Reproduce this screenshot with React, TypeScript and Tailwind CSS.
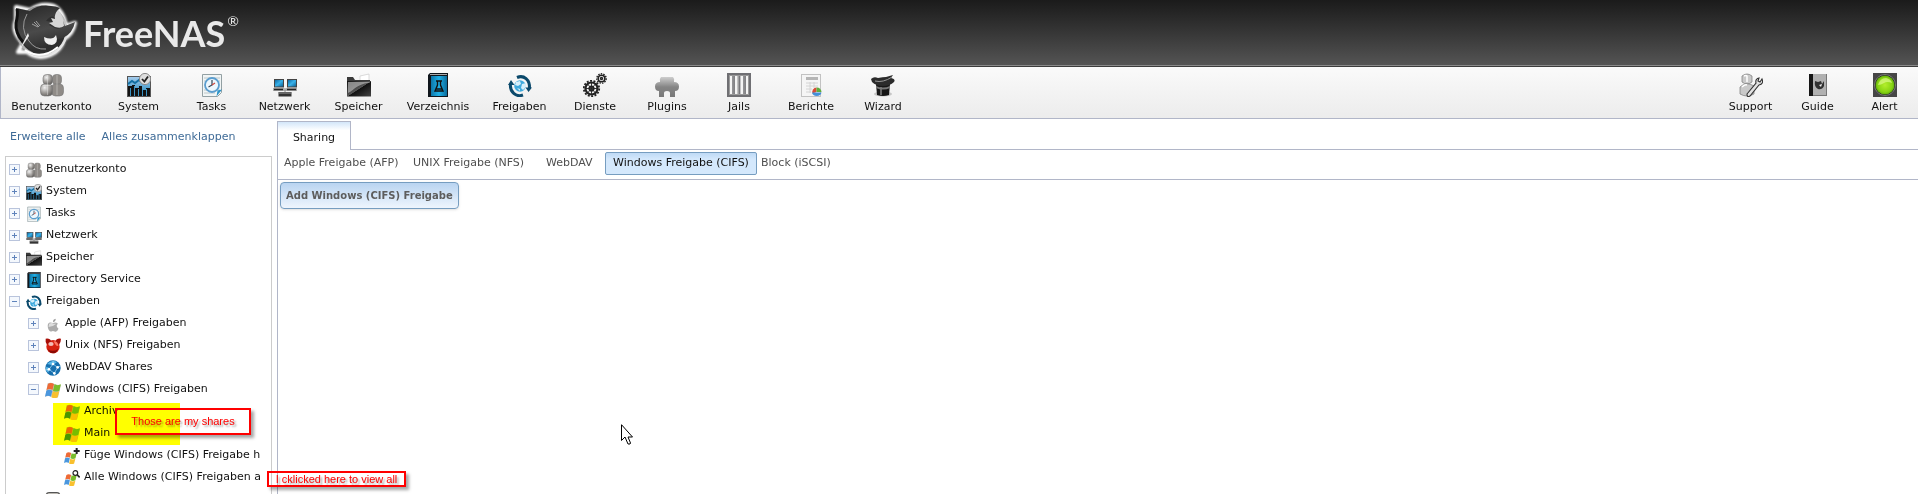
import { useId, type ReactNode } from "react";
import clsx from "clsx";

type IconProps = { className?: string };

function Icon({ className = "size-6", children }: IconProps & { children: ReactNode }) {
  return (
    <svg viewBox="0 0 24 24" className={clsx("shrink-0", className)} aria-hidden="true">
      {children}
    </svg>
  );
}

function UsersIcon(props: IconProps) {
  const id = useId();
  return (
    <Icon {...props}>
      <defs>
        <radialGradient id={id} cx="0.35" cy="0.3" r="0.8">
          <stop offset="0" stopColor="#f0f0f0" />
          <stop offset="0.5" stopColor="#a3a09d" />
          <stop offset="1" stopColor="#5f5c59" />
        </radialGradient>
      </defs>
      <g fill={`url(#${id})`} stroke="#777" strokeWidth="0.6">
        <rect x="12.5" y="1.5" width="9" height="10" rx="3.5" fill="#8f8b87" />
        <rect x="11.5" y="11" width="12" height="12" rx="4" fill="#8f8b87" />
        <rect x="3" y="1.5" width="9.5" height="10" rx="3.5" />
        <rect x="0.5" y="11" width="12" height="12" rx="4" />
      </g>
      <path d="M7.5 2v20M3 12.5h8M17 2v20" stroke="#fff" strokeOpacity="0.35" />
    </Icon>
  );
}

function SystemIcon(props: IconProps) {
  const id = useId();
  return (
    <Icon {...props}>
      <defs>
        <linearGradient id={id} x1="0" y1="0" x2="0" y2="1">
          <stop offset="0" stopColor="#a9cdec" />
          <stop offset="1" stopColor="#1684bd" />
        </linearGradient>
      </defs>
      <rect x="0.5" y="3.5" width="23" height="20" fill={`url(#${id})`} stroke="#555" />
      <path d="M1 11l4-3 3 2 4-3 4 3 5-2" fill="none" stroke="#1270a4" strokeWidth="2" />
      <path d="M1 13h4v-1h3v3h4v-2h3v4h4v-2h4v8H1z" fill="#111" />
      <path d="M3.5 15v8M7.5 13v10M11.5 16v7M15.5 17v6M19.5 16v7" stroke="#3992c4" />
      <circle cx="18" cy="6" r="5.6" fill="#dedede" stroke="#8a8a8a" />
      <path d="M15 6l2.4 2.6L21 3.5" fill="none" stroke="#222" strokeWidth="1.8" />
    </Icon>
  );
}

function TasksIcon(props: IconProps) {
  return (
    <Icon {...props}>
      <path d="M2.5 1.5h19v18l-4 4h-15z" fill="#f1f5f5" stroke="#93a0a3" />
      <path d="M4 5h16M4 8h16M4 17h16M4 20h11" stroke="#bcc7ca" />
      <circle cx="12" cy="12" r="7" fill="#edf7fd" stroke="#5b9dce" strokeWidth="1.8" />
      <path d="M12 7v5l-3.5 2" fill="none" stroke="#345" strokeWidth="1.2" />
      <path d="M12 12l3-2" stroke="#d0453a" strokeWidth="1.2" />
      <path d="M16.5 23.5l1-6 4.5-1z" fill="#2b93c8" />
    </Icon>
  );
}

function NetworkIcon(props: IconProps) {
  const id = useId();
  return (
    <Icon {...props}>
      <defs>
        <linearGradient id={id} x1="0" y1="0" x2="1" y2="1">
          <stop offset="0" stopColor="#0a5d96" />
          <stop offset="0.5" stopColor="#39b2ea" />
          <stop offset="1" stopColor="#075688" />
        </linearGradient>
      </defs>
      <g fill={`url(#${id})`} stroke="#444">
        <rect x="1.5" y="6.5" width="9" height="7.5" />
        <rect x="14.5" y="6.5" width="9" height="7.5" />
      </g>
      <path d="M0 15h11l1 3H0zM13 15h11v3H12z" fill="#aaa" />
      <path d="M1 16.500h9M14 16.500h9" stroke="#222" strokeWidth="1.4" />
      <path d="M12 15v5" stroke="#888" />
      <rect x="5.5" y="19" width="13" height="4.5" fill="#333" />
      <path d="M6 20h12" stroke="#999" />
    </Icon>
  );
}

function StorageIcon(props: IconProps) {
  const id = useId();
  return (
    <Icon {...props}>
      <defs>
        <linearGradient id={id} x1="0" y1="0" x2="1" y2="1">
          <stop offset="0" stopColor="#111" />
          <stop offset="0.5" stopColor="#555" />
          <stop offset="0.52" stopColor="#111" />
          <stop offset="1" stopColor="#444" />
        </linearGradient>
      </defs>
      <path d="M13 3l9-2v7h-9z" fill="#fff" stroke="#ccc" strokeWidth="0.7" />
      <path d="M0 4h6l2 3h15v3H0z" fill="#3a3a3a" />
      <path d="M0 8h24v15.5H0z" fill={`url(#${id})`} />
      <path d="M1 20C7 18 7 12 23 9.500V9H1z" fill="#b5b5b5" fillOpacity="0.7" />
    </Icon>
  );
}

function DirectoryIcon(props: IconProps) {
  const id = useId();
  return (
    <Icon {...props}>
      <defs>
        <linearGradient id={id}>
          <stop offset="0" stopColor="#0d76a8" />
          <stop offset="0.5" stopColor="#1fb1e8" />
          <stop offset="1" stopColor="#0c6c9b" />
        </linearGradient>
      </defs>
      <path d="M2 2l2-2h18v24H2z" fill="#10161c" />
      <rect x="5" y="3" width="16" height="20" fill={`url(#${id})`} />
      <path d="M4 1h17v1H4z" fill="#aaa" />
      <path d="M10 8h6M11.500 8v4L9 18h8l-2.500-6V8M10 16h6" fill="none" stroke="#111" strokeWidth="1.4" />
    </Icon>
  );
}

function SharingIcon(props: IconProps) {
  return (
    <Icon {...props}>
      <circle cx="12" cy="13" r="5.8" fill="#3fa9dc" />
      <path d="M8 9l4-1 1 3-3 2-3-1zM14 11l4-1v4l-3 3-2-2zM9 15l3 1v2z" fill="#d5effb" />
      <g fill="none" stroke="#0b496b" strokeWidth="3">
        <path d="M9 4.500C16 1.500 22 7 21.500 15" />
        <path d="M15 22C8 24.500 1.500 19 2.500 11" />
      </g>
      <path d="M17.500 14.500h6.500l-3.500 4.500zM0 12l3-5 3.500 5z" fill="#0b496b" />
    </Icon>
  );
}

function ServicesIcon(props: IconProps) {
  return (
    <Icon {...props}>
      <g fill="none" stroke="#232323">
        <circle cx="8.500" cy="15.500" r="6" strokeWidth="2.200" />
        <circle cx="8.500" cy="15.500" r="7.700" strokeWidth="1.800" strokeDasharray="2 1.460" />
        <circle cx="8.500" cy="15.500" r="2.200" strokeWidth="1.800" />
        <path d="M8.500 9v13M2.500 15.500h12M4.500 11l8 9M12.500 11l-8 9" strokeWidth="0.900" />
        <circle cx="18.500" cy="5.500" r="3.300" strokeWidth="1.600" />
        <circle cx="18.500" cy="5.500" r="4.700" strokeWidth="1.400" strokeDasharray="1.500 1.100" />
        <circle cx="18.500" cy="5.500" r="1" strokeWidth="1.400" />
      </g>
    </Icon>
  );
}

function PluginsIcon(props: IconProps) {
  const id = useId();
  return (
    <Icon {...props}>
      <defs>
        <linearGradient id={id} x1="0" y1="0" x2="0" y2="1">
          <stop offset="0" stopColor="#cecece" />
          <stop offset="0.500" stopColor="#858585" />
          <stop offset="1" stopColor="#777" />
        </linearGradient>
      </defs>
      <path
        d="M6 4h12q2 2 1 5 5 0 5 4.500t-4 4.500v6h-5v-4q0-2-3-2t-3 2v4H4v-6Q0 18 0 13.500T5 9Q4 6 6 4z"
        fill={`url(#${id})`}
      />
    </Icon>
  );
}

function JailsIcon(props: IconProps) {
  return (
    <Icon {...props}>
      <rect x="1" y="1" width="22" height="22" fill="#f4f4f4" stroke="#6f6f73" strokeWidth="2" />
      <rect x="2.500" y="2.500" width="19" height="19" fill="none" stroke="#999" />
      <path d="M6.500 3v18M12 3v18M17.500 3v18" stroke="#77777b" strokeWidth="2.800" />
      <path d="M6 3v18M11.500 3v18M17 3v18" stroke="#bbb" strokeWidth="0.600" />
    </Icon>
  );
}

function ReportsIcon(props: IconProps) {
  return (
    <Icon {...props}>
      <rect x="2.500" y="1.500" width="19" height="22" fill="#f5f5f5" stroke="#c2c2c2" />
      <path d="M7 5.500h12" stroke="#b5b5b5" strokeWidth="3" />
      <path d="M7 10h12M7 13h12M7 16h6M7 19h5M11 9v11M15 9v6" stroke="#d4d4d4" />
      <path d="M17.500 19v-4.500a4.500 4.500 0 0 0-4 6z" fill="#d84b36" />
      <path d="M17.500 19v-4.500a4.500 4.500 0 0 1 5 4.500z" fill="#5fae3c" />
      <path d="M13 19.500h9.500a4.800 4 0 0 1-9.500 0z" fill="#448fd8" />
    </Icon>
  );
}

function WizardIcon(props: IconProps) {
  return (
    <Icon {...props}>
      <ellipse cx="12" cy="21" rx="9" ry="2.500" fill="#999" fillOpacity="0.500" />
      <path d="M5 11h14l-1 11q-6 2-12 0z" fill="#161616" />
      <path d="M9 14h2v8H9z" fill="#666" />
      <path d="M5 13q7 3 14 0v2q-7 3-14 0z" fill="#777" />
      <path d="M0 6q3-3 7-1 5-1 8-1l7-2-2 3q5 1 3 4-4 4-11 4T1 9z" fill="#2b2b2b" />
      <path d="M4 8q8 2 17-4" fill="none" stroke="#999" />
    </Icon>
  );
}

function SupportIcon(props: IconProps) {
  return (
    <Icon {...props}>
      <g fill="#c9c9c9" stroke="#777" strokeWidth="0.700">
        <path d="M3 3q5-4 10 0v6q-5 4-10 0z" />
        <path d="M1 14q6-6 14-1v8q-7 4-14 0z" />
      </g>
      <path d="M5 3q2-1 3 0v6M3 14q3-3 5-2" fill="none" stroke="#fff" strokeWidth="1.500" />
      <path
        d="M8 21l9-11q-1-4 3-5l-1 3 2 1 2-3q2 5-3 6l-9 11q-3 2-3-2z"
        fill="#e2e2e2"
        stroke="#333"
        strokeWidth="1.100"
      />
    </Icon>
  );
}

function GuideIcon(props: IconProps) {
  return (
    <Icon {...props}>
      <rect x="3" y="1" width="18" height="22" fill="#b1b1b1" />
      <rect x="3" y="1" width="4" height="22" fill="#161616" />
      <path d="M20.500 1v22M7 22.500h14" stroke="#777" />
      <path d="M9 8l3 1 3-1 1 3 2-3v5q-2 4-6 3-4-2-3-8z" fill="#303030" />
      <path d="M13 12l3-1-1 3z" fill="#eee" />
    </Icon>
  );
}

function AlertIcon(props: IconProps) {
  const id = useId();
  return (
    <Icon {...props}>
      <defs>
        <radialGradient id={id} cx="0.500" cy="0.500" r="0.550">
          <stop offset="0" stopColor="#b4ee2c" />
          <stop offset="0.700" stopColor="#86d312" />
          <stop offset="1" stopColor="#4f9a08" />
        </radialGradient>
      </defs>
      <rect width="24" height="24" fill="#464646" />
      <circle cx="12" cy="12" r="10.500" fill="#222" stroke="#7b7b7b" />
      <circle cx="12" cy="12" r="9.500" fill={`url(#${id})`} />
      <path d="M5 12Q7 5 13 5q5 1 6 5-5-2-8 0t-6 2z" fill="#e9ffa0" fillOpacity="0.600" />
    </Icon>
  );
}

function AppleIcon(props: IconProps) {
  return (
    <Icon {...props}>
      <g transform="translate(2 4) scale(0.830)">
        <path
          d="M12 8q5-3 9 1-5 4 1 9-3 7-7 5-3-1-6 0Q5 24 3 17 1 8 7 7q3 0 5 1z"
          fill="#ababab"
        />
        <path d="M12 6q0-5 5-6 0 5-5 6z" fill="#999" />
        <path d="M5 9q5-2 8 0 3 0 5 0-5 5-14 6z" fill="#ddd" />
      </g>
    </Icon>
  );
}

function UnixIcon(props: IconProps) {
  return (
    <Icon {...props}>
      <circle cx="12" cy="13" r="10" fill="#d6200f" />
      <path d="M1 1q7-1 8 4L3 10Q0 6 1 1zM24 1q-7-1-8 4l5 5q3-4 3-9z" fill="#a80f08" />
      <ellipse cx="9" cy="9" rx="4" ry="3" fill="#fff" fillOpacity="0.700" />
      <path d="M13 5q7 0 7 7-4 1-7-7z" fill="#ff7963" />
      <path d="M4 17q8 5 16-1-3 7-8 7t-8-6z" fill="#8a0903" />
    </Icon>
  );
}

function WebdavIcon(props: IconProps) {
  return (
    <Icon {...props}>
      <circle cx="12" cy="12" r="11.500" fill="#176fae" />
      <path d="M3 6q7-7 15-3l-6 5zM2 10l5 2-2 7Q0 16 2 10z" fill="#59b7e8" />
      <path
        d="M12 6L6 14l8 6 5-9zM12 6V1M6 14l-5 1M14 20l1 3M19 11l4-2"
        fill="none"
        stroke="#a9dbf5"
        strokeWidth="1.100"
      />
      <g fill="#fff">
        <circle cx="12" cy="6" r="2" />
        <circle cx="6" cy="14" r="2" />
        <circle cx="14" cy="20" r="2" />
        <circle cx="19" cy="11" r="2" />
      </g>
    </Icon>
  );
}

function FlagPanels() {
  return (
    <>
      <path d="M4.500 3q4-3 9 0l-2.300 9q-4.200-3-9 0z" fill="#ee6a35" />
      <path d="M14.300 3.500q4.500 2.500 9.500 0l-2.300 9.500q-4.700 2.500-9.500 0z" fill="#78bd2b" />
      <path d="M2 13q4-3 9 0l-2.200 9q-4.300-3-8.800 0z" fill="#4a97de" />
      <path d="M11.800 14q4.500 2.500 9.500 0l-2.300 9q-4.700 2.500-9.500 0z" fill="#f9c02e" />
    </>
  );
}

function WindowsIcon(props: IconProps) {
  return (
    <Icon {...props}>
      <path d="M4 2q5-2 10 1 5 2 10 1l-4.500 19q-5 2-9-1-6-2-10 0z" fill="#7f7a64" fillOpacity="0.450" />
      <FlagPanels />
    </Icon>
  );
}

function WindowsAddIcon(props: IconProps) {
  return (
    <Icon {...props}>
      <g transform="translate(0 5) scale(0.800)">
        <FlagPanels />
      </g>
      <path d="M19 0v9M14.500 4.500h9" stroke="#222" strokeWidth="3" />
    </Icon>
  );
}

function WindowsViewIcon(props: IconProps) {
  return (
    <Icon {...props}>
      <g transform="translate(0 5) scale(0.800)">
        <FlagPanels />
      </g>
      <circle cx="17" cy="4.500" r="3.500" fill="#fff" stroke="#222" strokeWidth="1.800" />
      <path d="M19.500 7l4 4" stroke="#222" strokeWidth="2.400" />
    </Icon>
  );
}

function BlockIcon(props: IconProps) {
  return (
    <Icon {...props}>
      <rect x="2" y="1" width="20" height="22" rx="4" fill="#ddd9cf" stroke="#555" strokeWidth="2" />
      <path d="M6 8h12M6 13h12" stroke="#666" strokeWidth="2" />
    </Icon>
  );
}

function Logo() {
  return (
    <svg viewBox="0 0 72 66" className="h-[66px] w-[72px] shrink-0" aria-hidden="true">
      <defs>
        <linearGradient id="logo-body" x1="0" y1="0" x2="0.300" y2="1">
          <stop offset="0" stopColor="#262626" />
          <stop offset="0.600" stopColor="#4a4a4a" />
          <stop offset="1" stopColor="#2c2c2c" />
        </linearGradient>
        <linearGradient id="logo-ring" x1="0" y1="0" x2="1" y2="1">
          <stop offset="0" stopColor="#888" />
          <stop offset="0.600" stopColor="#bbb" />
          <stop offset="1" stopColor="#fff" />
        </linearGradient>
        <filter id="logo-glow" x="-20%" y="-20%" width="140%" height="140%">
          <feGaussianBlur stdDeviation="1.300" />
        </filter>
      </defs>
      <path
        d="M8 7l14 3Q33 2 46 6q9 4 12 20l9-3q-2 11-11 16-3 12-14 16-13 5-23-3L10 52l5-9Q3 31 8 20z"
        fill="none"
        stroke="#fff"
        strokeWidth="4"
        strokeLinejoin="round"
        filter="url(#logo-glow)"
      />
      <circle cx="34" cy="31" r="24.500" fill="#2e2e2e" stroke="url(#logo-ring)" strokeWidth="2.500" />
      <path
        d="M8 8l14 3Q31 4 43 6q5 0 9 2-4 3-5 9-5-2-9 4l6 1-3 3 4 2q5 4 12-1l10-4q-2 11-12 16-6 2-13 0-4 15-15 14Q17 47 13 40 5 30 9 20z"
        fill="url(#logo-body)"
      />
      <path d="M9 9q1 6-1 14-1 10 7 19" fill="none" stroke="#111" strokeWidth="3" />
      <path d="M19 14q-8 14 2 27 6 9 17 8" fill="none" stroke="#999" strokeWidth="1" />
      <path d="M50 10q-4 4-3 9l-4-1 2 4-4 1 6 4q6 2 9-1 0-10-6-16z" fill="#d5d5d5" />
      <path d="M36 37q9 4 12-2 3 8-4 10-8 0-8-8z" fill="#efefef" />
      <path d="M24 24l6 3M26 22l5 5M28 21l4 5" stroke="#aaa" strokeWidth="0.900" />
      <path d="M20 33L11 51l10-15z" fill="#eee" />
      <path d="M17 50q16 11 33-3" fill="none" stroke="#fff" strokeWidth="2" />
    </svg>
  );
}

type ToolbarItem = {
  label: string;
  icon: (props: IconProps) => ReactNode;
  width: string;
};

const mainItems: ToolbarItem[] = [
  { label: "Benutzerkonto", icon: UsersIcon, width: "w-[101px]" },
  { label: "System", icon: SystemIcon, width: "w-[73px]" },
  { label: "Tasks", icon: TasksIcon, width: "w-[73px]" },
  { label: "Netzwerk", icon: NetworkIcon, width: "w-[73px]" },
  { label: "Speicher", icon: StorageIcon, width: "w-[75px]" },
  { label: "Verzeichnis", icon: DirectoryIcon, width: "w-[84px]" },
  { label: "Freigaben", icon: SharingIcon, width: "w-[79px]" },
  { label: "Dienste", icon: ServicesIcon, width: "w-[72px]" },
  { label: "Plugins", icon: PluginsIcon, width: "w-[72px]" },
  { label: "Jails", icon: JailsIcon, width: "w-[72px]" },
  { label: "Berichte", icon: ReportsIcon, width: "w-[72px]" },
  { label: "Wizard", icon: WizardIcon, width: "w-[72px]" },
];

const helpItems: ToolbarItem[] = [
  { label: "Support", icon: SupportIcon, width: "w-[67px]" },
  { label: "Guide", icon: GuideIcon, width: "w-[67px]" },
  { label: "Alert", icon: AlertIcon, width: "w-[67px]" },
];

function ToolbarButton({ item }: { item: ToolbarItem }) {
  const ItemIcon = item.icon;
  return (
    <button type="button" className={clsx("flex shrink-0 flex-col items-center gap-0.5 pt-1.5", item.width)}>
      <ItemIcon />
      <span className="leading-4">{item.label}</span>
    </button>
  );
}

type TreeNode = {
  label: string;
  icon: (props: IconProps) => ReactNode;
  open?: boolean;
  leaf?: boolean;
  children?: TreeNode[];
};

const tree: TreeNode[] = [
  { label: "Benutzerkonto", icon: UsersIcon },
  { label: "System", icon: SystemIcon },
  { label: "Tasks", icon: TasksIcon },
  { label: "Netzwerk", icon: NetworkIcon },
  { label: "Speicher", icon: StorageIcon },
  { label: "Directory Service", icon: DirectoryIcon },
  {
    label: "Freigaben",
    icon: SharingIcon,
    open: true,
    children: [
      { label: "Apple (AFP) Freigaben", icon: AppleIcon },
      { label: "Unix (NFS) Freigaben", icon: UnixIcon },
      { label: "WebDAV Shares", icon: WebdavIcon },
      {
        label: "Windows (CIFS) Freigaben",
        icon: WindowsIcon,
        open: true,
        children: [
          { label: "Archiv", icon: WindowsIcon, leaf: true },
          { label: "Main", icon: WindowsIcon, leaf: true },
          { label: "Füge Windows (CIFS) Freigabe h", icon: WindowsAddIcon, leaf: true },
          { label: "Alle Windows (CIFS) Freigaben a", icon: WindowsViewIcon, leaf: true },
        ],
      },
      { label: "Block (iSCSI)", icon: BlockIcon },
    ],
  },
];

function TreeItem({ node }: { node: TreeNode }) {
  const NodeIcon = node.icon;
  return (
    <li>
      <div className="flex h-[22px] items-center">
        {node.leaf ? (
          <span className="w-[11px] shrink-0" />
        ) : (
          <button
            type="button"
            aria-label={node.label}
            aria-expanded={Boolean(node.open)}
            className="flex size-[11px] shrink-0 items-center justify-center border border-[#b9c4dc] bg-[#f4f8fd]"
          >
            <svg viewBox="0 0 5 5" className="size-[5px] shrink-0" aria-hidden="true">
              <path d={node.open ? "M0 2.500h5" : "M0 2.500h5M2.500 0v5"} stroke="#5f83bb" />
            </svg>
          </button>
        )}
        <NodeIcon className="mt-0.5 ml-1.5 size-4" />
        <button type="button" className="ml-1 whitespace-nowrap">
          {node.label}
        </button>
      </div>
      {node.children && (
        <ul className="pl-[19px]">
          {node.children.map((child) => (
            <TreeItem key={child.label} node={child} />
          ))}
        </ul>
      )}
    </li>
  );
}

const shareTabs = [
  { label: "Apple Freigabe (AFP)", width: "w-[129px]" },
  { label: "UNIX Freigabe (NFS)", width: "w-[133px]" },
  { label: "WebDAV", width: "w-[63px]" },
  { label: "Windows Freigabe (CIFS)", width: "w-[152px]", active: true },
  { label: "Block (iSCSI)", width: "w-[88px]" },
];

export default function App() {
  return (
    <div className="relative flex h-screen flex-col overflow-hidden bg-white font-['DejaVu_Sans',Verdana,sans-serif] text-[11px] text-[#111]">
      <header className="flex h-[67px] shrink-0 items-center border-b border-[#3c3c3c] bg-linear-to-b from-[#1b1b1b] to-[#555] pl-2 shadow-[inset_0_-1px_0_#8a8a8a]">
        <Logo />
        <h1 className="ml-[3px] flex items-start font-['Lato',sans-serif] text-4xl leading-10 font-bold text-[#e9e9e9]">
          FreeNAS
          <span className="ml-0.5 text-sm leading-4 font-normal">®</span>
        </h1>
      </header>

      <nav className="flex h-[52px] shrink-0 justify-between border-b border-l border-[#b1b6c8] bg-linear-to-b from-[#fafafa] to-[#ececec]">
        <div className="flex">
          {mainItems.map((item) => (
            <ToolbarButton key={item.label} item={item} />
          ))}
        </div>
        <div className="flex">
          {helpItems.map((item) => (
            <ToolbarButton key={item.label} item={item} />
          ))}
        </div>
      </nav>

      <div className="flex min-h-0 flex-1">
        <aside className="flex w-[272px] shrink-0 flex-col pl-[5px]">
          <div className="flex h-[37px] shrink-0 items-center gap-4 pl-[5px] text-[#3f6b97]">
            <a href="#expand">Erweitere alle</a>
            <a href="#collapse">Alles zusammenklappen</a>
          </div>
          <div className="min-h-0 flex-1 overflow-hidden border border-b-0 border-[#ccc] pt-px pl-[3px]">
            <ul>
              {tree.map((node) => (
                <TreeItem key={node.label} node={node} />
              ))}
            </ul>
          </div>
        </aside>

        <main className="ml-[5px] flex min-w-0 flex-1 flex-col pt-0.5">
          <div className="flex h-[29px] shrink-0">
            <button
              type="button"
              className="w-[74px] border-x border-t border-[#b1b6c8] bg-linear-to-b from-[#d3e6f9] to-white to-30% pt-1"
            >
              Sharing
            </button>
            <div className="flex-1 border-b border-[#b1b6c8]" />
          </div>
          <div className="flex h-[30px] shrink-0 items-start border-b border-l border-[#b1b6c8] pt-0.5 pl-0.5 text-[#4f4f4f]">
            {shareTabs.map((tab) => (
              <button
                key={tab.label}
                type="button"
                className={clsx(
                  "h-[23px] shrink-0 rounded-xs border px-[3px] whitespace-nowrap",
                  tab.width,
                  tab.active
                    ? "border-[#769dc0] bg-linear-to-b from-[#bfdaf5] to-[#d4e8fc] to-30% text-center text-[#111]"
                    : "border-transparent text-left",
                )}
              >
                {tab.label}
              </button>
            ))}
          </div>
          <div className="flex-1 border-l border-[#b1b6c8] pt-0.5 pl-0.5">
            <button
              type="button"
              className="h-[27px] rounded border border-[#769dc0] bg-linear-to-b from-[#b9d4f1] to-[#eef5fd] px-[5px] text-[10px] font-bold whitespace-nowrap text-[#5d5d5d] shadow-sm"
            >
              Add Windows (CIFS) Freigabe
            </button>
          </div>
        </main>
      </div>

      {/* annotations drawn over the tree */}
      <div className="absolute top-[403px] left-[53px] h-[42px] w-[127px] bg-[#ff0] mix-blend-multiply" />
      <p className="absolute top-[408px] left-[115px] flex h-[27px] w-[136px] items-center justify-center border-2 border-[#f00] font-['Liberation_Sans',Arial,sans-serif] text-[#f00] shadow-[3px_3px_3px_rgba(0,0,0,0.35)] [text-shadow:2px_2px_2px_rgba(0,0,0,0.35)]">
        Those are my shares
      </p>
      <p className="absolute top-[471px] left-[267px] flex h-4 w-[139px] items-center justify-center border-2 border-[#f00] font-['Liberation_Sans',Arial,sans-serif] whitespace-nowrap text-[#f00] shadow-[3px_3px_3px_rgba(0,0,0,0.35)] [text-shadow:2px_2px_2px_rgba(0,0,0,0.35)]">
        I cklicked here to view all
      </p>
      <svg viewBox="0 0 12 21" className="absolute top-[424px] left-[621px] h-[21px] w-3" aria-hidden="true">
        <path
          d="M0.500 0.700v15.800l3.500-3.500 3 7h2l0.500-1-2.500-6h4.500z"
          fill="#fff"
          stroke="#000"
        />
      </svg>
    </div>
  );
}
